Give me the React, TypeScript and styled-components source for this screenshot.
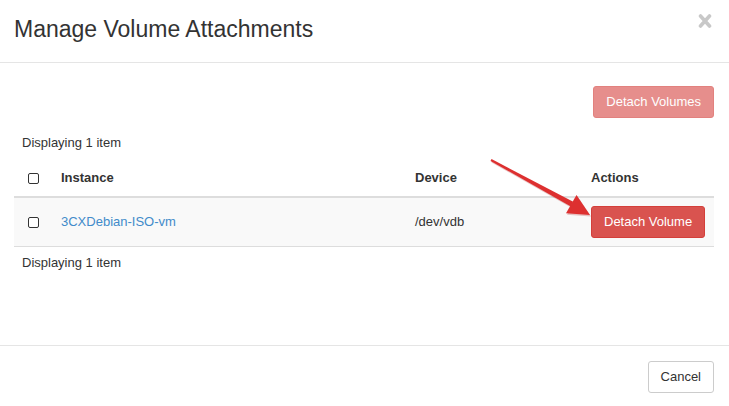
import React from "react";
import styled, { createGlobalStyle } from "styled-components";

const Global = createGlobalStyle`
  html, body { margin: 0; padding: 0; background: #fff; }
  body { font-family: "Liberation Sans", Arial, sans-serif; font-size: 13px; color: #333; }
  * { box-sizing: border-box; }
`;

const Modal = styled.div`
  position: relative;
  width: 729px;
  height: 406px;
  overflow: hidden;
  display: flex;
  flex-direction: column;
  background: #fff;
  & > * { flex-shrink: 0; }
`;

const Header = styled.div`
  height: 63px;
  padding: 16px 15px 0 14px;
  border-bottom: 1px solid #e5e5e5;
  display: flex;
  justify-content: space-between;
  align-items: flex-start;
`;

const Title = styled.h3`
  margin: 0;
  font-size: 23px;
  line-height: 26px;
  font-weight: 400;
  color: #333;
`;

const Close = styled.button`
  border: 0;
  background: none;
  padding: 0;
  margin: -3px 2px 0 0;
  width: 14px;
  height: 16px;
  display: flex;
  cursor: pointer;
`;

const Body = styled.div`
  height: 282px;
  padding: 23px 15px 0 14px;
  display: flex;
  flex-direction: column;
`;

const Toolbar = styled.div`
  display: flex;
  justify-content: flex-end;
`;

const Btn = styled.button<{ $variant: "danger" | "default"; $disabled?: boolean }>`
  font-family: "Liberation Sans", Arial, sans-serif;
  font-size: 13px;
  line-height: 18px;
  height: 32px;
  padding: 6px 12px;
  border-radius: 3px;
  border: 1px solid ${(p) => (p.$variant === "danger" ? "#d43f3a" : "#ccc")};
  background: ${(p) => (p.$variant === "danger" ? "#d9534f" : "#fff")};
  color: ${(p) => (p.$variant === "danger" ? "#fff" : "#333")};
  opacity: ${(p) => (p.$disabled ? 0.65 : 1)};
  cursor: pointer;
`;

const Caption = styled.div<{ $top?: boolean }>`
  line-height: 20px;
  padding: ${(p) => (p.$top ? "15px 8px 7px" : "6px 8px")};
`;

const Table = styled.div`
  display: grid;
  grid-template-columns: 39px 354px 176px 131px;
  width: 700px;
`;

const HeadCell = styled.div`
  height: 38px;
  padding: 8px 8px;
  line-height: 20px;
  font-weight: 700;
  border-bottom: 2px solid #ddd;
  display: flex;
  align-items: center;
`;

const Cell = styled.div`
  height: 49px;
  padding: 8px 8px;
  line-height: 20px;
  background: #f9f9f9;
  border-bottom: 1px solid #ddd;
  display: flex;
  align-items: center;
`;

const CheckCell = styled.div<{ $head?: boolean }>`
  height: ${(p) => (p.$head ? "38px" : "49px")};
  background: ${(p) => (p.$head ? "transparent" : "#f9f9f9")};
  border-bottom: ${(p) => (p.$head ? "2px" : "1px")} solid #ddd;
  display: flex;
  align-items: center;
  justify-content: center;
`;

const Check = styled.span`
  display: inline-block;
  width: 11px;
  height: 11px;
  border: 1.2px solid #333;
  border-radius: 2px;
  background: #fff;
  margin-right: 1px;
`;

const Link = styled.a`
  color: #428bca;
  text-decoration: none;
`;

const Footer = styled.div`
  border-top: 1px solid #e5e5e5;
  padding: 15px 15px;
  display: flex;
  justify-content: flex-end;
`;

const Overlay = styled.svg`
  position: absolute;
  left: 0;
  top: 0;
  pointer-events: none;
`;

export default function App() {
  return (
    <>
      <Global />
      <Modal>
        <Header>
          <Title>Manage Volume Attachments</Title>
          <Close aria-label="Close">
            <svg width="14" height="16" viewBox="0 0 14 16">
              <path d="M2.5 3 L11.5 13 M11.5 3 L2.5 13" stroke="#c8c8c8" strokeWidth="3.6" strokeLinecap="round" />
            </svg>
          </Close>
        </Header>
        <Body>
          <Toolbar>
            <Btn $variant="danger" $disabled>Detach Volumes</Btn>
          </Toolbar>
          <Caption $top>Displaying 1 item</Caption>
          <Table>
            <CheckCell $head><Check /></CheckCell>
            <HeadCell>Instance</HeadCell>
            <HeadCell>Device</HeadCell>
            <HeadCell>Actions</HeadCell>
            <CheckCell><Check /></CheckCell>
            <Cell><Link href="#">3CXDebian-ISO-vm</Link></Cell>
            <Cell>/dev/vdb</Cell>
            <Cell><Btn $variant="danger">Detach Volume</Btn></Cell>
          </Table>
          <Caption>Displaying 1 item</Caption>
        </Body>
        <Footer>
          <Btn $variant="default">Cancel</Btn>
        </Footer>
        <Overlay width="729" height="406" viewBox="0 0 729 406">
          <polygon points="490.5,160.9 491.5,159.1 573.2,201.8 570.8,206.6" fill="#b02020" opacity="0.25" transform="translate(1,1.5)" />
          <polygon points="590,215 566,213.2 576.5,195" fill="#b02020" opacity="0.25" transform="translate(1,1.5)" />
          <polygon points="490.5,160.9 491.5,159.1 573.2,201.8 570.8,206.6" fill="#dd3030" />
          <polygon points="590,215 566,213.2 576.5,195" fill="#dd3030" />
        </Overlay>
      </Modal>
    </>
  );
}
